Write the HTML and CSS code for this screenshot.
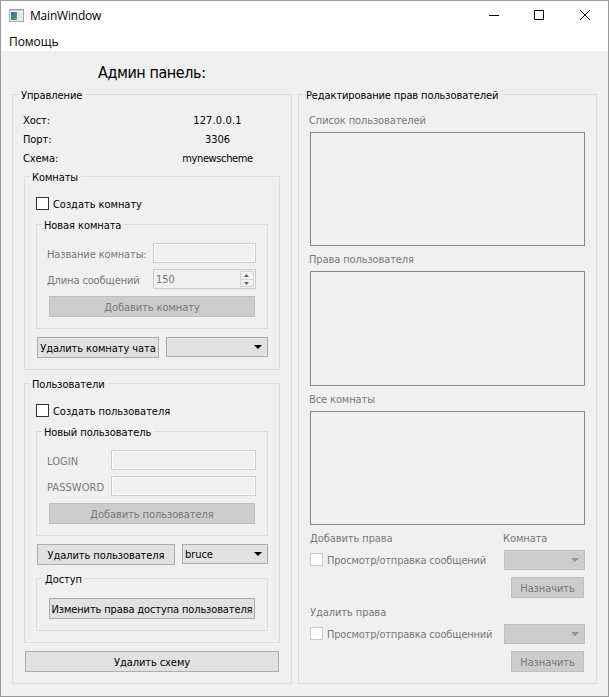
FILE: index.html
```html
<!DOCTYPE html>
<html lang="ru">
<head>
<meta charset="utf-8">
<title>MainWindow</title>
<link rel="stylesheet" href="styles.css">
</head>
<body>
<div class="window">
  <header class="titlebar">
    <svg class="app-icon" width="15" height="13" viewBox="0 0 15 13"><rect x=".5" y=".5" width="14" height="12" fill="#f4f4f4" stroke="#a0a5aa"/><rect x="1" y="1" width="13" height="1" fill="#c8ccd0"/><rect x="2" y="3" width="6" height="8" fill="#46858a"/><path d="M2 3h3v3L2 8z" fill="#486f9c"/><path d="M5 11h3V6z" fill="#55a481"/><rect x="9" y="3" width="2" height="8" fill="#dce1e5"/><rect x="12" y="3" width="1" height="8" fill="#d5e5dc"/></svg>
    <span class="caption">MainWindow</span>
    <svg class="controls" width="103" height="12" viewBox="0 0 103 12" fill="none" stroke="#000"><path d="M1 6.500h10M46.500 1.500h9v9h-9zM92 1l10 10M102 1L92 11"/></svg>
  </header>
  <nav class="menubar"><span>Помощь</span></nav>
  <main class="content">
    <h1>Админ панель:</h1>
    <div class="columns">
      <section class="group manage">
        <h2><span>Управление</span></h2>
        <dl class="info">
          <dt>Хост:</dt><dd class="host">127.0.0.1</dd>
          <dt>Порт:</dt><dd>3306</dd>
          <dt>Схема:</dt><dd class="scheme">mynewscheme</dd>
        </dl>
        <section class="group rooms">
          <h2><span>Комнаты</span></h2>
          <label class="check"><i class="box"></i><span>Создать комнату</span></label>
          <section class="group new-room">
            <h2><span>Новая комната</span></h2>
            <div class="field"><span class="name">Название комнаты:</span><div class="input"></div></div>
            <div class="field"><span class="name">Длина сообщений</span><div class="input spin"><span>150</span>
              <svg width="14" height="16" viewBox="0 0 14 16"><path d="M.5.500h13v15H.5zM.5 8.500h13" fill="none" stroke="#d4d4d4"/><path d="M4 6h5L6.500 3zM4 11h5l-2.500 3z" fill="#646464"/></svg></div></div>
            <div class="button off"><span>Добавить комнату</span></div>
          </section>
          <div class="row"><div class="button del-room"><span>Удалить комнату чата</span></div>
            <div class="combo"><span></span><i class="arrow"></i></div></div>
        </section>
        <section class="group users">
          <h2><span>Пользователи</span></h2>
          <label class="check"><i class="box"></i><span>Создать пользователя</span></label>
          <section class="group new-user">
            <h2><span>Новый пользователь</span></h2>
            <div class="field"><span class="name login">LOGIN</span><div class="input"></div></div>
            <div class="field"><span class="name login">PASSWORD</span><div class="input"></div></div>
            <div class="button off"><span>Добавить пользователя</span></div>
          </section>
          <div class="row"><div class="button del-user"><span>Удалить пользователя</span></div>
            <div class="combo"><span>bruce</span><i class="arrow"></i></div></div>
          <section class="group access">
            <h2><span>Доступ</span></h2>
            <div class="button"><span>Изменить права доступа пользователя</span></div>
          </section>
        </section>
        <div class="button del-scheme"><span>Удалить схему</span></div>
      </section>
      <section class="group rights">
        <h2><span>Редактирование прав пользователей</span></h2>
        <p>Список пользователей</p>
        <div class="list"></div>
        <p>Права пользователя</p>
        <div class="list tall"></div>
        <p>Все комнаты</p>
        <div class="list"></div>
        <div class="assign">
          <div class="heads"><span>Добавить права</span><span class="room">Комната</span></div>
          <div class="line"><label class="check"><i class="box"></i><span>Просмотр/отправка сообщений</span></label><div class="combo off"><span></span><i class="arrow"></i></div></div>
          <div class="button off set"><span>Назначить</span></div>
        </div>
        <div class="assign">
          <div class="heads"><span>Удалить права</span></div>
          <div class="line"><label class="check"><i class="box"></i><span>Просмотр/отправка сообщенний</span></label><div class="combo off"><span></span><i class="arrow"></i></div></div>
          <div class="button off set"><span>Назначить</span></div>
        </div>
      </section>
    </div>
  </main>
</div>
</body>
</html>
```
FILE: styles.css
```css
* { box-sizing: border-box; }
body { margin: 0; font: 11px/14px "DejaVu Sans Condensed", "DejaVu Sans", sans-serif; font-stretch: condensed; letter-spacing: -.08px; color: #000; }
h1, h2, p, dl, dd { margin: 0; font-weight: normal; }
span { white-space: nowrap; }
.window { width: 609px; height: 697px; border: 1px solid #999; background: #f0f0f0; }
.titlebar { display: flex; align-items: center; height: 29px; padding-left: 8px; background: #fff; font: 12px/16px "Open Sans", sans-serif; }
.app-icon { margin-top: -1px; }
.caption { margin: 1px 0 0 6px; letter-spacing: -.2px; }
.controls { margin-left: auto; margin-right: 17px; margin-top: -1px; }
.menubar { height: 21px; padding: 4px 8px; background: #fff; font: 12px/16px "Open Sans", sans-serif; letter-spacing: -.05px; }
.content { padding: 0 11px; }
h1 { margin: 12px 0 0 86px; font-size: 16px; line-height: 20px; height: 31px; letter-spacing: -.42px; }
.columns { display: flex; gap: 6px; }
.group { border: 1px solid #dcdcdc; }
h2 { height: 14px; margin: -7px 0 0 6px; font-size: 11px; line-height: 15px; }
h2 span { display: inline-block; padding: 0 3px 0 2px; background: #f0f0f0; }
.manage { width: 280px; height: 590px; padding: 0 11px; }
.manage > h2 { margin-left: -5px; }
.info { display: grid; grid-template-columns: 131px 127px; row-gap: 5px; margin: 12px 0 10px -1px; }
.info dd { text-align: center; }
.info .host { letter-spacing: .15px; }
.info .scheme { letter-spacing: -.38px; }
.manage > .rooms { height: 194px; padding: 0 11px; }
.rooms > h2, .users > h2 { margin-left: -6px; }
.check { display: flex; align-items: center; height: 13px; }
.check span { padding-top: 2px; letter-spacing: -.04px; }
.box { flex: none; width: 13px; height: 13px; margin-right: 4px; border: 1px solid #333; background: #fff; }
.rooms > .check, .users > .check { margin-top: 13px; }
.new-room, .new-user { height: 105px; margin-top: 14px; padding: 0 11px 0 10px; }
.new-room h2, .new-user h2 { margin-left: -5px; }
.field { display: flex; align-items: center; height: 20px; margin-top: 6px; color: #787878; }
h2 + .field { margin-top: 11px; }
.name { width: 106px; padding-top: 3px; letter-spacing: -.13px; }
.login { width: 64px; letter-spacing: .05px; }
.input { flex: 1; height: 20px; border: 1px solid #ccc; box-shadow: inset 0 0 0 1px #fff; }
.spin { display: flex; align-items: center; justify-content: space-between; padding: 0 1px 0 2px; box-shadow: none; }
.spin span { padding-top: 2px; }
.button { height: 21px; border: 1px solid #adadad; background: #e1e1e1; text-align: center; line-height: 21px; }
.off { border-color: #bfbfbf; background: #ccc; color: #787878; }
.field + .button { margin: 7px 1px 0 2px; }
.row { display: flex; gap: 7px; margin: 8px 0 0 1px; }
.del-room { width: 122px; }
.del-user { width: 138px; }
.combo { display: flex; align-items: center; justify-content: space-between; flex: 1; height: 20px; padding: 1px 5px 0 2px; border: 1px solid #adadad; background: #e1e1e1; }
.combo span { padding-top: 1px; }
.arrow { width: 8px; height: 4px; margin-top: -1px; background: #000; clip-path: polygon(0 0, 100% 0, 50% 100%); }
.combo.off { border-color: #bfbfbf; background: #ccc; }
.off .arrow { height: 5px; background: linear-gradient(135deg, #969696 63%, #fff 63%); clip-path: polygon(0 0, 88% 0, 100% 20%, 60% 100%, 48% 100%); }
.manage > .users { height: 260px; margin-top: 13px; padding: 0 11px; }
.access { height: 53px; margin-top: 13px; padding: 0 12px; }
.access h2 { margin-left: -6px; }
.access .button { margin-top: 12px; letter-spacing: -.13px; }
.del-scheme { margin: 8px 1px 0; }
.rights { width: 299px; height: 590px; padding: 0 11px; color: #787878; }
.rights > h2 { margin-left: -6px; color: #000; letter-spacing: -.11px; }
.rights p { height: 14px; margin: 12px 0 4px -1px; letter-spacing: -.11px; }
.rights .list + p { margin: 7px 0 4px -1px; }
.list { width: 275px; height: 114px; border: 1px solid #828790; }
.tall { height: 115px; }
.assign { width: 275px; height: 74px; padding-top: 7px; }
.heads { display: flex; justify-content: space-between; height: 18px; }
.room { width: 82px; }
.line { display: flex; justify-content: space-between; height: 20px; }
.line .check { height: 20px; margin-top: -1px; }
.line .check span { padding-top: 3px; letter-spacing: -.19px; }
.line .box { border-color: #ccc; }
.line .combo { flex: none; width: 81px; }
.set { width: 73px; margin: 7px 1px 0 auto; }
```
